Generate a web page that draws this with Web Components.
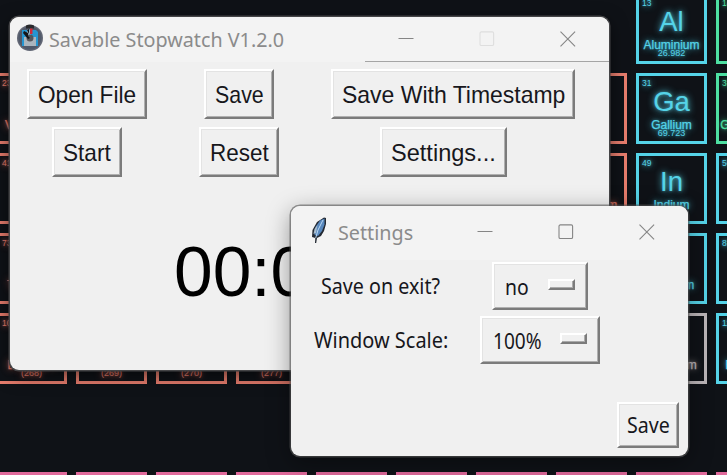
<!DOCTYPE html>
<html lang="en">
<head>
<meta charset="utf-8">
<title>Savable Stopwatch</title>
<style>
html,body{margin:0;width:727px;height:475px;overflow:hidden;background:#0f1217}
</style>
</head>
<body>
<desk-top></desk-top>
<script>
const make = (host, html) => { host.attachShadow({mode:'open'}).innerHTML = html; };

/* One line of text condensed or widened to a fixed width. */
customElements.define('fit-text', class extends HTMLElement {
  connectedCallback() {
    make(this, `<style>:host{display:block;white-space:nowrap;flex:none}
      span{display:inline-block;transform-origin:0 50%}</style><span><slot></slot></span>`);
    const w = +this.getAttribute('w'), s = this.shadowRoot.querySelector('span');
    this.style.width = w + 'px';
    s.style.transform = `scaleX(${w / s.offsetWidth})`;
  }
});

customElements.define('element-tile', class extends HTMLElement {
  connectedCallback() {
    const [n, sym, name, mass] = ['n','sym','name','mass'].map(k => this.getAttribute(k) || '');
    make(this, `<style>
      :host{display:grid;grid-template-rows:14px 26px 14px 8px;box-sizing:border-box;width:71px;height:71px;border:3px solid var(--c);color:var(--c);
        font-family:"Liberation Sans",Arial,sans-serif;text-align:center;justify-items:center;text-shadow:0 0 7px var(--c),0 0 3px color-mix(in srgb,var(--c) 50%,transparent)}
      div{white-space:nowrap}
      .n{justify-self:start;font-size:8.5px;line-height:14px;margin-left:3px}
      .s{font-size:27.5px;line-height:25px;margin-top:-1px}
      .a{font-size:12px;line-height:14px;margin-top:2px;-webkit-text-stroke:.25px var(--c)}
      .m{font-size:9px;line-height:8px;margin-top:-1px}
    </style><div class="n">${n}</div><div class="s">${sym}</div><div class="a">${name}</div><div class="m">${mass}</div>`);
  }
});

customElements.define('element-table', class extends HTMLElement {
  connectedCallback() {
    const R = '#e77d6d', B = '#55d3e8', G = '#4edfa2', W = '#bbb5b8', P = '#e16a9c';
    const t = (col, row, c, n='', sym='', name='', mass='') =>
      `<element-tile style="grid-area:${row}/${col};--c:${c}" n="${n}" sym="${sym}" name="${name}" mass="${mass}"></element-tile>`;
    let h = t(9,1,B,13,'Al','Aluminium','26.982') + t(10,1,G,14) +
      t(1,2,R,23,'','Vanadium') + t(8,2,R) + t(9,2,B,31,'Ga','Gallium','69.723') + t(10,2,G,32,'','Germanium') +
      t(1,3,R,41) + t(8,3,R,'','','Cadmium') + t(9,3,B,49,'In','Indium') + t(10,3,B,50) +
      t(1,4,R,73,'','Tantalum') + t(9,4,B,'','','Thallium') + t(10,4,B,82) +
      t(1,5,R,105,'','Dubnium','(268)') + t(2,5,R,'','','','(269)') + t(3,5,R,'','','','(270)') + t(4,5,R,'','','','(277)') +
      t(9,5,W,'','','Nihonium') + t(10,5,B,114,'','Flerovium');
    for (let i = 1; i < 11; i++) h += t(i,7,P);
    make(this, `<style>:host{display:grid;width:791px;grid-template-columns:repeat(10,71px);grid-template-rows:repeat(5,71px) 70px 71px;gap:9px;margin:-7px 0 0 -4px}</style>${h}`);
  }
});

customElements.define('tk-button', class extends HTMLElement {
  connectedCallback() {
    make(this, `<style>:host{display:flex;box-sizing:border-box;flex:none;align-items:center;justify-content:center;background:#f0f0f0;color:#17171c;
      border:2px solid;border-color:#fff #7b7b7b #7b7b7b #fff;box-shadow:inset 1px 1px #e3e3e3,inset -1px -1px #b0b0b0;padding-top:2px}</style><slot></slot>`);
  }
});

customElements.define('tk-option', class extends HTMLElement {
  connectedCallback() {
    make(this, `<style>:host{display:flex;box-sizing:border-box;flex:none;align-items:center;justify-content:space-between;background:#f0f0f0;color:#17171c;
      border:2px solid;border-color:#fff #7b7b7b #7b7b7b #fff;box-shadow:inset 1px 1px #e3e3e3,inset -1px -1px #b0b0b0;padding:1px 11px 0 11px}
      i{box-sizing:border-box;width:27px;height:11px;margin-top:-4px;border:2px solid;border-color:#fff #7b7b7b #7b7b7b #fff;box-shadow:inset -1px -1px #aaa}</style><slot></slot><i></i>`);
  }
});

customElements.define('app-window', class extends HTMLElement {
  connectedCallback() {
    make(this, `<style>
      :host{display:flex;flex-direction:column;box-sizing:border-box;background:#f0f0f0;border-radius:9px;overflow:hidden;
        font-family:"Liberation Sans",Arial,sans-serif}
      header{display:flex;flex:none;height:var(--bar);background:#f3f3f3;color:#8b8b8b;font:20px/26px "Noto Sans","Open Sans",sans-serif}
      .t{padding-top:var(--tt);display:flex;flex:1}
      svg{display:block;flex:none}
      .c{stroke:#858585;fill:none;stroke-width:1.1;margin-top:var(--ct);margin-right:var(--cr)}
    </style><header><div class="t"><slot name="title"></slot></div>
    <svg class="c" width="178" height="16" viewBox="0 0 178 16">
      <path d="M.5 7.5h15"/><rect x="82" y=".9" width="13.6" height="13.6" rx="1.3" style="stroke:var(--mx)"/><path d="M162.500 .7l14.600 14.600m0-14.600l-14.600 14.600"/></svg>
    </header><slot></slot>`);
  }
});

customElements.define('desk-top', class extends HTMLElement {
  connectedCallback() {
    make(this, `<style>
      :host{display:block;position:relative;width:727px;height:475px;overflow:hidden}
      app-window{position:absolute}
      #main{left:10px;top:17px;width:599px;height:353px;--bar:45px;--tt:10px;--ct:14px;--cr:33px;--mx:#dedede;box-shadow:0 0 0 1.5px #454547,0 5px 18px #0009}
      #set{left:291px;top:206px;width:397px;height:250px;--bar:54px;--tt:14px;--ct:18px;--cr:33px;--mx:#858585;box-shadow:0 0 0 1.500px #5559,0 6px 24px #0006}
      .logo{display:block;flex:none;margin:-3px 5px 0 6px}
      .feather{display:block;flex:none;margin:-4px 10px 0 18px}
      .edge{align-self:flex-end;flex:none;width:244px;height:1px;background:#a5a5a5;margin-top:-1px}
      .row{display:flex;font-size:24px;line-height:28px}
      .row tk-button{height:50px}
      .r1{gap:57px;padding:7px 0 0 17px}
      .r2{gap:77px;padding:8px 0 0 42px}
      .time{font-size:71px;line-height:80px;color:#000;margin:55px 0 0 164px}
      .opt{display:flex;align-items:center;font:21px/28px "Noto Sans","Open Sans",sans-serif;color:#17171c}
      .opt fit-text{margin-top:0}
      .o1{height:48px;padding:2px 0 0 30px;gap:52px}
      .o2{height:48px;padding:6px 0 0 23px;gap:32px}
      .foot{display:flex;justify-content:flex-end;margin:38px 9px 0 0;font:21px/28px "Noto Sans","Open Sans",sans-serif}
      .foot fit-text{margin-top:-2px}
    </style>
    <element-table></element-table>
    <app-window id="main">
      <svg slot="title" class="logo" width="28" height="28" viewBox="0 0 28 28">
        <circle cx="14" cy="14" r="13" fill="#626775"/><circle cx="14" cy="14" r="11.500" fill="#50596a"/>
        <path d="M10 1.500q4-2 8 0v3h-8z" fill="#29292c"/>
        <path d="M6 6h14l2 2v14H6z" fill="#2596d2"/><path d="M8 13h12v9H8z" fill="#aab4bd"/>
        <path d="M11 5.500h4v7h-4z" fill="#8fb0c4"/><path d="M14 4.500h2.500V10H14z" fill="#d32938"/>
        <circle cx="14" cy="14" r="3.500" fill="#55565c"/><path d="M8 7l4 2v3l2 2-2 1-5-6z" fill="#151519"/><path d="M11 6l2-1v5z" fill="#151519"/>
      </svg>
      <fit-text slot="title" w="235">Savable Stopwatch V1.2.0</fit-text>
      <div class="edge"></div>
      <div class="row r1">
        <tk-button style="width:120px"><fit-text w="98">Open File</fit-text></tk-button>
        <tk-button style="width:70px"><fit-text w="49">Save</fit-text></tk-button>
        <tk-button style="width:244px"><fit-text w="223">Save With Timestamp</fit-text></tk-button>
      </div>
      <div class="row r2">
        <tk-button style="width:70px"><fit-text w="48">Start</fit-text></tk-button>
        <tk-button style="width:80px"><fit-text w="59">Reset</fit-text></tk-button>
        <tk-button style="width:127px;margin-left:24px"><fit-text w="105">Settings...</fit-text></tk-button>
      </div>
      <fit-text class="time" w="135">00:0</fit-text>
    </app-window>
    <app-window id="set">
      <svg slot="title" class="feather" width="19" height="29" viewBox="0 0 19 29">
        <path d="M6 27l.3-5-3.300-1 .5-7L8 6l7-4.500 2 .5v6l-2 7-3 5-4 2-.8 5z" fill="#242a33"/>
        <path d="M5.500 19l1-8 4.500-6.500 4.500-2v6L13 15l-4 5z" fill="#5787bd"/>
        <path d="M4.500 18l1-5 3-4-1.500 8z" fill="#a8bdcf"/><path d="M6.700 22L9 14l5-10" stroke="#b9d7f1" fill="none"/>
      </svg>
      <fit-text slot="title" w="75">Settings</fit-text>
      <div class="opt o1"><fit-text w="119">Save on exit?</fit-text><tk-option style="width:96px;height:48px"><fit-text w="24">no</fit-text></tk-option></div>
      <div class="opt o2"><fit-text w="134">Window Scale:</fit-text><tk-option style="width:120px;height:48px"><fit-text w="49">100%</fit-text></tk-option></div>
      <div class="foot"><tk-button style="width:62px;height:46px"><fit-text w="43">Save</fit-text></tk-button></div>
    </app-window>`);
  }
});
</script>
</body>
</html>
